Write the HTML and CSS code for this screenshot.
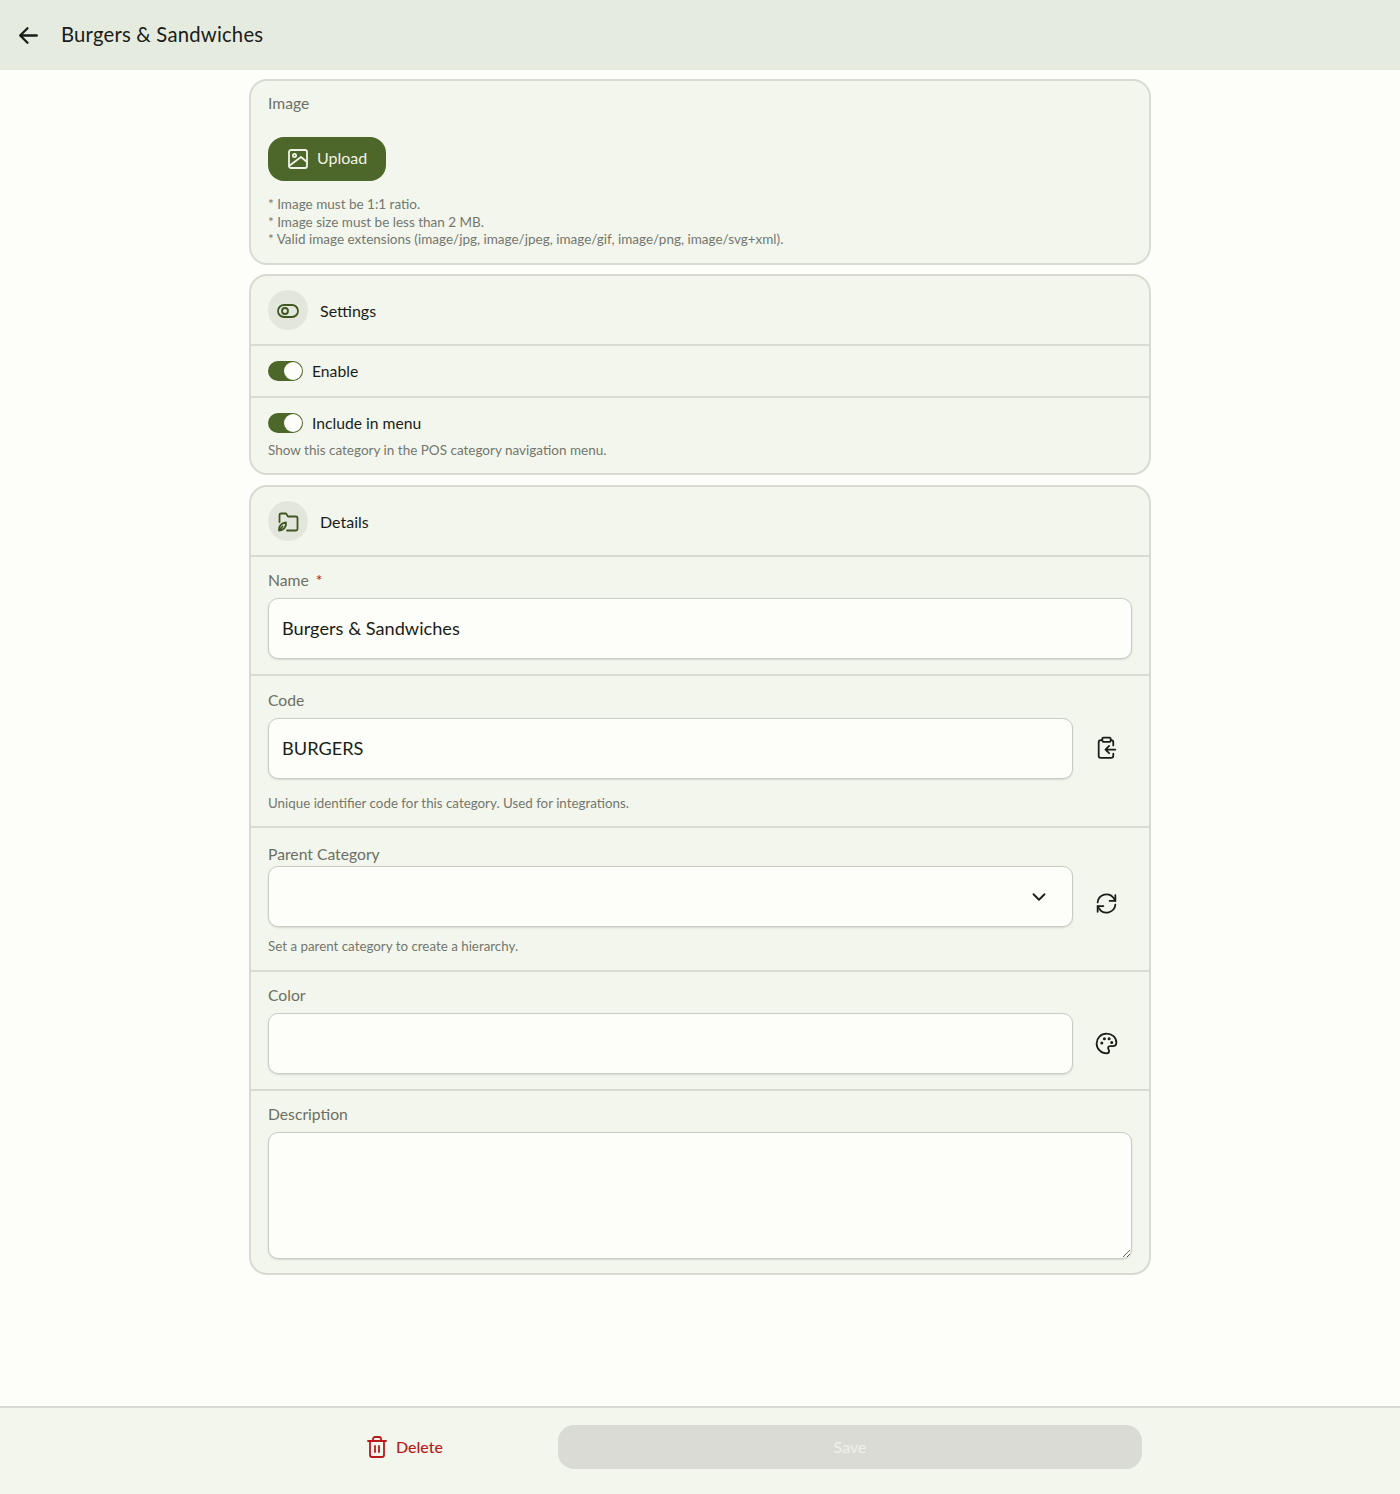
FILE: index.html
```html
<!DOCTYPE html>
<html lang="en">

<head>
    <meta charset="UTF-8">
    <meta name="viewport" content="width=device-width, initial-scale=1.0">
    <title>Burgers &amp; Sandwiches</title>
    <link rel="stylesheet" href="styles.css">
</head>

<body>
    <header class="topbar">
        <svg class="back-icon" viewBox="0 0 24 24"><path d="M20 12H4M11 5l-7 7 7 7"/></svg>
        <span class="topbar-title">Burgers &amp; Sandwiches</span>
    </header>

    <main class="content">
        <section class="card card-image">
            <div class="field-label">Image</div>
            <button class="upload-btn">
                <svg class="icon" viewBox="0 0 24 24"><rect x="3" y="3" width="18" height="18" rx="2"/><circle cx="8.500" cy="8.500" r="1.600"/><path d="M3 19l12-9 6 5"/></svg>
                <span class="upload-text">Upload</span>
            </button>
            <div class="notes">
                <div>* Image must be 1:1 ratio.</div>
                <div>* Image size must be less than 2 MB.</div>
                <div>* Valid image extensions (image/jpg, image/jpeg, image/gif, image/png, image/svg+xml).</div>
            </div>
        </section>

        <section class="card card-settings">
            <div class="card-head">
                <span class="head-icon">
                    <svg class="icon" viewBox="0 0 24 24"><rect x="2" y="6" width="20" height="12" rx="6"/><circle cx="9" cy="12" r="3"/></svg>
                </span>
                <span>Settings</span>
            </div>
            <div class="row row-toggle">
                <span class="toggle"><span class="knob"></span></span>
                <span>Enable</span>
            </div>
            <div class="row row-toggle-hint">
                <div class="toggle-line">
                    <span class="toggle"><span class="knob"></span></span>
                    <span>Include in menu</span>
                </div>
                <div class="hint">Show this category in the POS category navigation menu.</div>
            </div>
        </section>

        <section class="card">
            <div class="card-head">
                <span class="head-icon">
                    <svg class="icon" viewBox="0 0 24 24"><path d="M3.500 12V5a1.500 1.500 0 0 1 1.500-1.500h5l2 3h8a1.500 1.500 0 0 1 1.500 1.500v11a1.500 1.500 0 0 1-1.500 1.500h-9"/><path d="M3 20.500c-.5-4 2-7.500 7-8 .5 4.500-2.500 8-7 8zM3 20.500l3.500-4"/></svg>
                </span>
                <span>Details</span>
            </div>
            <div class="row field">
                <label class="field-label">Name <span class="required">*</span></label>
                <input class="text-input" type="text" value="Burgers &amp; Sandwiches">
            </div>
            <div class="row field field-hint">
                <label class="field-label">Code</label>
                <div class="input-line">
                    <input class="text-input" type="text" value="BURGERS">
                    <svg class="side-icon" viewBox="0 0 24 24"><path d="M8 5H6.500A2 2 0 0 0 4.500 7v13a2 2 0 0 0 2 2h10a2 2 0 0 0 2-2v-2M16 5h.5a2 2 0 0 1 2 2v3"/><rect x="8" y="2.500" width="8" height="4" rx="1"/><path d="M20.500 14H11M14.500 10.500L11 14l3.500 3.500"/></svg>
                </div>
                <div class="hint">Unique identifier code for this category. Used for integrations.</div>
            </div>
            <div class="row field field-parent">
                <label class="field-label">Parent Category</label>
                <div class="input-line">
                    <div class="select-box">
                        <svg class="chevron" viewBox="0 0 24 24"><path d="M6 9l6 6 6-6"/></svg>
                    </div>
                    <svg class="side-icon side-icon-low" viewBox="0 0 24 24"><path d="M3.500 11A8.500 8.500 0 0 1 19 7l1.500 2.500M20.500 13A8.500 8.500 0 0 1 5 17l-1.500-2.500"/><path d="M20.500 4v5.500H15M3.500 20v-5.500H9"/></svg>
                </div>
                <div class="hint">Set a parent category to create a hierarchy.</div>
            </div>
            <div class="row field">
                <label class="field-label">Color</label>
                <div class="input-line">
                    <input class="text-input" type="text">
                    <svg class="side-icon side-icon-color" viewBox="0 0 24 24"><path d="M12 2.500C6.500 2.500 2.500 6.800 2.500 12s4.300 9.500 9.500 9.500c1.600 0 2.500-1 2.500-2.200 0-1.500-1-1.900-1-3 0-1 .8-1.800 2-1.800h2.500c2.500 0 3.500-1.700 3.500-3.500 0-4.800-4.300-8.500-9.500-8.500z"/><circle class="dot" cx="7.500" cy="11.500" r=".6"/><circle class="dot" cx="10" cy="7.500" r=".6"/><circle class="dot" cx="14.500" cy="7.500" r=".6"/><circle class="dot" cx="17" cy="11" r=".6"/></svg>
                </div>
            </div>
            <div class="row field field-last">
                <label class="field-label">Description</label>
                <textarea class="text-area"></textarea>
            </div>
        </section>
    </main>

    <footer class="footer">
        <button class="delete-btn">
            <svg class="icon" viewBox="0 0 24 24"><path d="M3 6h18M8 6V4a2 2 0 0 1 2-2h4a2 2 0 0 1 2 2v2M5 6v14a2 2 0 0 0 2 2h10a2 2 0 0 0 2-2V6M10 11v6M14 11v6"/></svg>
            <span class="delete-text">Delete</span>
        </button>
        <button class="save-btn">Save</button>
    </footer>
</body>

</html>
```

FILE: styles.css
```css
* {
    box-sizing: border-box;
}

body {
    margin: 0;
    height: 1494px;
    display: flex;
    flex-direction: column;
    background-color: #fdfef9;
    color: #1a1c18;
    font-family: "Lato", "Noto Sans", sans-serif;
    font-size: 16px;
}

svg {
    fill: none;
    stroke: currentColor;
    stroke-width: 1.800;
    stroke-linecap: round;
    stroke-linejoin: round;
}

.topbar {
    height: 70px;
    flex-shrink: 0;
    display: flex;
    align-items: center;
    padding-left: 16px;
    background-color: #e6ebdf;
}

.back-icon {
    width: 25px;
    height: 25px;
    stroke-width: 2.200;
}

.topbar-title {
    margin-left: 20px;
    padding-bottom: 2px;
    font-size: 20.300px;
    letter-spacing: 0.2px;
}

.content {
    flex: 1;
    width: 902px;
    margin: 0 auto;
    padding-top: 9px;
    display: flex;
    flex-direction: column;
    gap: 9px;
}

.card {
    background-color: #f3f6ed;
    border: 2px solid #d9dbd2;
    border-radius: 18px;
}

.card-settings {
    margin-bottom: 1px;
}

.card-image {
    height: 186px;
    padding: 12px 17px 0;
}

.field-label {
    color: #6b6f65;
    font-size: 15.700px;
    line-height: 20px;
}

.upload-btn {
    display: flex;
    align-items: center;
    gap: 7px;
    width: 118px;
    height: 44px;
    margin-top: 24px;
    padding: 0 0 0 17px;
    border: none;
    border-radius: 16px;
    background-color: #4d6629;
    color: #f0f4e8;
    font-family: inherit;
    font-size: 16px;
}

.upload-text {
    padding-bottom: 3px;
}

.upload-btn .icon {
    width: 24px;
    height: 24px;
    margin-left: 1px;
}

.icon {
    width: 24px;
    height: 24px;
    flex-shrink: 0;
}

.notes {
    margin-top: 15px;
    color: #73776d;
    font-size: 13.500px;
    line-height: 17.500px;
}

.card-head {
    height: 68px;
    display: flex;
    align-items: center;
    gap: 12px;
    padding-left: 17px;
}

.head-icon {
    width: 40px;
    height: 40px;
    padding-top: 1px;
    display: flex;
    align-items: center;
    justify-content: center;
    border-radius: 50%;
    background-color: #e3e7db;
    color: #3f5623;
}

.row {
    border-top: 2px solid #d9dbd2;
    padding-left: 17px;
    padding-right: 17px;
}

.row-toggle {
    height: 52px;
    display: flex;
    align-items: center;
    gap: 9px;
}

.row-toggle-hint {
    height: 77px;
    padding-top: 15px;
}

.toggle-line {
    display: flex;
    align-items: center;
    gap: 9px;
}

.row-toggle span:last-child,
.toggle-line span:last-child {
    font-size: 15.700px;
}

.toggle {
    width: 35px;
    height: 20px;
    padding-right: 1px;
    display: flex;
    align-items: center;
    justify-content: flex-end;
    border-radius: 10px;
    background-color: #4d6629;
}

.knob {
    width: 18px;
    height: 18px;
    border-radius: 50%;
    background-color: #fdfef9;
}

.hint {
    color: #73776d;
    font-size: 13.350px;
    line-height: 17px;
}

.row-toggle-hint .hint {
    margin-top: 9px;
    font-size: 13.500px;
}

.field {
    padding-top: 13px;
    height: 119px;
}

.field-hint {
    height: 152px;
    padding-top: 14px;
}

.field-parent {
    height: 144px;
    padding-top: 16px;
}

.field-last {
    height: 184px;
}

.required {
    margin-left: 3px;
    color: #ba1a1a;
}

.input-line {
    display: flex;
    align-items: center;
}

.text-input,
.select-box,
.text-area {
    display: block;
    width: 100%;
    height: 61px;
    margin-top: 8px;
    padding: 0 13px 1px;
    border: 1px solid #c9ccc2;
    border-radius: 10px;
    background-color: #fdfef9;
    box-shadow: 0 1px 2px rgba(0, 0, 0, 0.12);
    color: #1a1c18;
    font-family: inherit;
    font-size: 18.200px;
    outline: none;
}

.input-line .text-input,
.select-box {
    width: 805px;
    flex-shrink: 0;
}

.select-box {
    margin-top: 2px;
    display: flex;
    align-items: center;
    justify-content: flex-end;
    padding-right: 22px;
}

.chevron {
    width: 22px;
    height: 22px;
    margin-top: 1px;
    stroke-width: 2;
}

.side-icon {
    width: 25px;
    height: 25px;
    margin-left: 21px;
    margin-top: 6px;
    stroke-width: 1.700;
}

.side-icon-low {
    margin-top: 16px;
}

.side-icon-color {
    margin-top: 8px;
}

.dot {
    fill: currentColor;
}

.field-hint .hint {
    margin-top: 16px;
}

.field-parent .hint {
    margin-top: 11px;
}

.text-area {
    height: 127px;
    padding-top: 12px;
    resize: vertical;
}

.footer {
    height: 88px;
    flex-shrink: 0;
    display: flex;
    align-items: center;
    padding-left: 249px;
    padding-bottom: 8px;
    border-top: 2px solid #d9dbd2;
    background-color: #f3f6ed;
}

.delete-btn {
    width: 309px;
    padding: 0 0 0 116px;
    display: flex;
    align-items: center;
    gap: 7px;
    border: none;
    background: none;
    color: #ba1a1a;
    font-family: inherit;
    font-size: 16px;
    font-weight: 500;
}

.delete-btn .icon {
    width: 24px;
    height: 24px;
}

.delete-text {
    padding-bottom: 2px;
}

.save-btn {
    width: 584px;
    height: 44px;
    padding-bottom: 2px;
    border: none;
    border-radius: 16px;
    background-color: #dadbd4;
    color: #f0f1ea;
    font-family: inherit;
    font-size: 16px;
}
```
